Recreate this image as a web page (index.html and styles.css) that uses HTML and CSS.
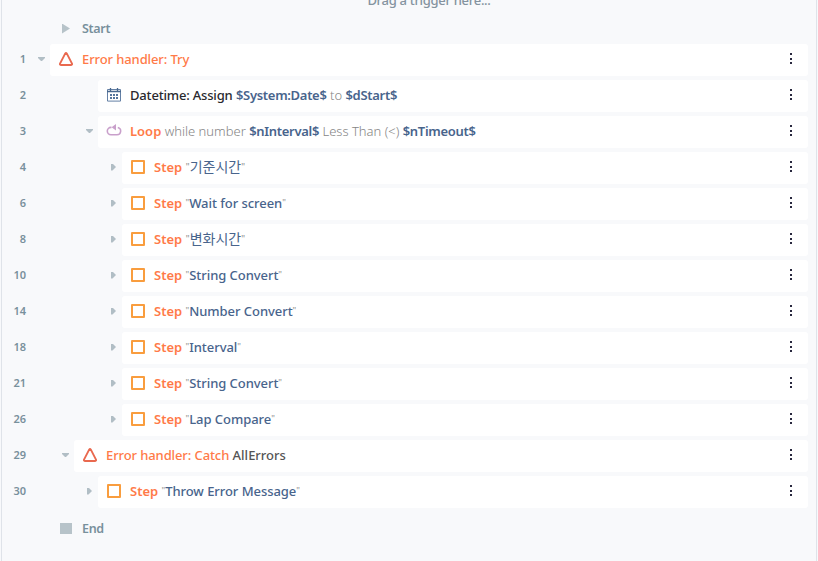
FILE: index.html
```
<!DOCTYPE html>
<html lang="en">
<head>
<meta charset="utf-8">
<title>Task editor</title>
<link rel="stylesheet" href="styles.css">
</head>
<body>
<svg width="0" height="0" class="defs">
  <symbol id="triangle" viewBox="0 0 16 16"><path d="M7.3 2.4Q8 1.3 8.7 2.4L14 12.6Q14.4 14 13.2 14H2.8Q1.6 14 2 12.6Z" fill="none" stroke="#e9694f" stroke-width="1.9" stroke-linejoin="round"/></symbol>
  <symbol id="square" viewBox="0 0 16 16"><rect x="2" y="2" width="12" height="12" fill="none" stroke="#f99d3e" stroke-width="2" stroke-linejoin="round"/></symbol>
  <symbol id="calendar" viewBox="0 0 16 16"><path d="M1.5 2.5h13v11.6h-13z" fill="none" stroke="#6480a5"/><path d="M1 4.5h14M4.5 1v3M11.5 1v3" fill="none" stroke="#48688f" stroke-width="1.3"/><path d="M4 8h2m1 0h2m1 0h2M4 11h2m1 0h2m1 0h2" stroke="#55749b" stroke-width="1.8"/></symbol>
  <symbol id="loop" viewBox="0 0 16 16"><path d="M5.5 4.4H5a3.7 3.7 0 0 0 0 7.4h6a3.7 3.7 0 0 0 .8-7.3M8 4.4h2" fill="none" stroke="#c9a0cb" stroke-width="1.6"/><path d="M5.6 4.2 10 .9v6.6z" fill="#c9a0cb"/></symbol>
  <symbol id="dots" viewBox="0 0 4 14"><path d="M1 1h2v2H1zM1 6h2v2H1zM1 10h2v2H1z" fill="#29283e"/></symbol>
</svg>
<main class="canvas">
  <div class="trigger">Drag a trigger here...</div>
  <div class="marker start"><i class="play"></i><span>Start</span></div>
  <div class="list">
    <div class="row"><b class="num">1</b><i class="toggle open l0"></i><div class="card"><svg class="icon"><use href="#triangle"/></svg><p><span class="action">Error handler: Try</span></p><svg class="dots"><use href="#dots"/></svg></div></div>
    <div class="row"><b class="num">2</b><i class="toggle l2"></i><div class="card"><svg class="icon"><use href="#calendar"/></svg><p><span class="name">Datetime: Assign</span> <span class="value">$System:Date$</span> <span class="light">to</span> <span class="value">$dStart$</span></p><svg class="dots"><use href="#dots"/></svg></div></div>
    <div class="row"><b class="num">3</b><i class="toggle open l2"></i><div class="card"><svg class="icon"><use href="#loop"/></svg><p><span class="action strong">Loop</span> <span class="light">while number</span> <span class="value">$nInterval$</span> <span class="light">Less Than (&lt;)</span> <span class="value">$nTimeout$</span></p><svg class="dots"><use href="#dots"/></svg></div></div>
    <div class="row"><b class="num">4</b><i class="toggle shut l3"></i><div class="card"><svg class="icon"><use href="#square"/></svg><p><span class="action strong">Step</span> <q class="korean">기준시간</q></p><svg class="dots"><use href="#dots"/></svg></div></div>
    <div class="row"><b class="num">6</b><i class="toggle shut l3"></i><div class="card"><svg class="icon"><use href="#square"/></svg><p><span class="action strong">Step</span> <q>Wait for screen</q></p><svg class="dots"><use href="#dots"/></svg></div></div>
    <div class="row"><b class="num">8</b><i class="toggle shut l3"></i><div class="card"><svg class="icon"><use href="#square"/></svg><p><span class="action strong">Step</span> <q class="korean">변화시간</q></p><svg class="dots"><use href="#dots"/></svg></div></div>
    <div class="row"><b class="num">10</b><i class="toggle shut l3"></i><div class="card"><svg class="icon"><use href="#square"/></svg><p><span class="action strong">Step</span> <q>String Convert</q></p><svg class="dots"><use href="#dots"/></svg></div></div>
    <div class="row"><b class="num">14</b><i class="toggle shut l3"></i><div class="card"><svg class="icon"><use href="#square"/></svg><p><span class="action strong">Step</span> <q>Number Convert</q></p><svg class="dots"><use href="#dots"/></svg></div></div>
    <div class="row"><b class="num">18</b><i class="toggle shut l3"></i><div class="card"><svg class="icon"><use href="#square"/></svg><p><span class="action strong">Step</span> <q>Interval</q></p><svg class="dots"><use href="#dots"/></svg></div></div>
    <div class="row"><b class="num">21</b><i class="toggle shut l3"></i><div class="card"><svg class="icon"><use href="#square"/></svg><p><span class="action strong">Step</span> <q>String Convert</q></p><svg class="dots"><use href="#dots"/></svg></div></div>
    <div class="row"><b class="num">26</b><i class="toggle shut l3"></i><div class="card"><svg class="icon"><use href="#square"/></svg><p><span class="action strong">Step</span> <q>Lap Compare</q></p><svg class="dots"><use href="#dots"/></svg></div></div>
    <div class="row"><b class="num">29</b><i class="toggle open l1"></i><div class="card"><svg class="icon"><use href="#triangle"/></svg><p><span class="action">Error handler: Catch</span> <span class="plain">AllErrors</span></p><svg class="dots"><use href="#dots"/></svg></div></div>
    <div class="row"><b class="num">30</b><i class="toggle shut l2"></i><div class="card"><svg class="icon"><use href="#square"/></svg><p><span class="action strong">Step</span> <q>Throw Error Message</q></p><svg class="dots"><use href="#dots"/></svg></div></div>
  </div>
  <div class="marker"><i class="stop"></i><span>End</span></div>
</main>
</body>
</html>
```
FILE: styles.css
```
* { box-sizing: border-box; }
body {
  margin: 0;
  height: 561px;
  overflow: hidden;
  background: #f8f9fb;
  font: 500 13px/18px "Noto Sans", "Noto Sans CJK KR", sans-serif;
}
.defs { display: none; }
.canvas {
  display: flow-root;
  height: 561px;
  margin: 0 1px;
  border: solid #dfe3e9;
  border-width: 0 1px;
}
.trigger {
  height: 11px;
  line-height: 0;
  padding-left: 40px;
  text-align: center;
  letter-spacing: -0.3px;
  color: #84939f;
}
.marker {
  display: flex;
  align-items: center;
  height: 33px;
  padding-left: 58px;
  color: #78909c;
  font-weight: 600;
  font-size: 12.5px;
  letter-spacing: -0.3px;
}
.start { padding-top: 2px; }
.marker i { width: 12px; height: 11px; margin-right: 10px; background: #b7c3c9; }
.marker .play { width: 8px; height: 10px; margin: 0 12px 0 2px; clip-path: polygon(0 0, 100% 50%, 0 100%); }
.list { display: flex; flex-direction: column; gap: 4px; padding-right: 8px; margin-bottom: 4px; }
.row { display: flex; height: 32px; align-items: center; }
.num {
  width: 24px;
  padding-bottom: 2px;
  text-align: right;
  font-size: 11px;
  font-weight: 600;
  color: #78909c;
}
.toggle { display: flex; justify-content: flex-end; padding: 0 5px 2px 0; flex: none; }
.toggle::before { content: ""; background: #b1bec5; }
.open::before { width: 7px; height: 4px; clip-path: polygon(0 0, 100% 0, 100% 25%, 57% 100%, 43% 100%, 0 25%); }
.shut { padding-right: 6px; }
.shut::before { width: 5px; height: 7px; clip-path: polygon(0 0, 30% 0, 100% 50%, 30% 100%, 0 100%); }
.l0 { width: 24px; }
.l1 { width: 48px; }
.l2 { width: 72px; }
.l3 { width: 96px; }
.card {
  display: flex;
  flex: 1;
  align-items: center;
  height: 32px;
  padding: 0 15px 2px 8px;
  border-radius: 3px;
  background: #fff;
}
.icon { width: 16px; height: 16px; margin-right: 8px; }
.card p { flex: 1; height: 18px; margin: 0; white-space: nowrap; }
.dots { width: 4px; height: 14px; }
.action { color: #ff7a48; letter-spacing: -0.1px; }
.strong { font-weight: 600; letter-spacing: 0; }
.name { color: #29292e; letter-spacing: -0.18px; }
.value { color: #48648c; font-weight: 600; letter-spacing: -0.3px; }
.light { color: #858585; font-weight: 300; }
.plain { color: #555; }
q { color: #48648c; letter-spacing: -0.05px; quotes: "\"" "\""; }
q::before, q::after { font-size: 9px; color: #929292; vertical-align: 2px; font-weight: 400; line-height: 1px; }
.korean { font-family: "Noto Sans CJK KR", sans-serif; font-size: 14px; font-weight: 400; line-height: 1px; }
```
